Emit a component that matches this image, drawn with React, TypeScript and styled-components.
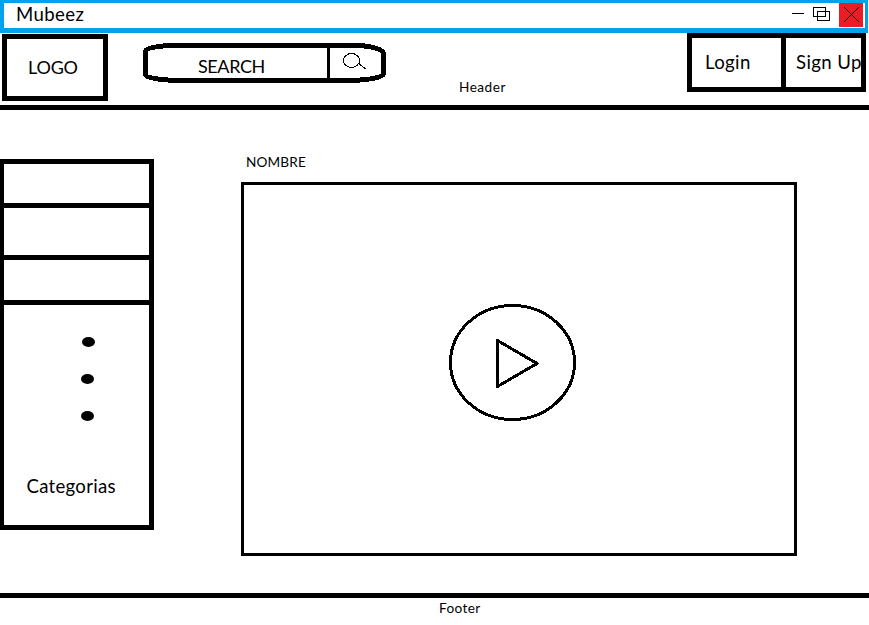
import React from "react";
import styled, { createGlobalStyle } from "styled-components";

const Global = createGlobalStyle`
  *, *::before, *::after { box-sizing: border-box; }
  body { margin: 0; background: #fff; color: #000; font-family: Lato, Carlito, sans-serif; overflow: hidden; }
  svg { display: block; shape-rendering: crispEdges; fill: none; stroke: #000; }
`;

const Page = styled.div`
  display: flex;
  flex-direction: column;
  width: 869px;
  height: 625px;
`;

const Label = styled.span<{ $small?: boolean; $spacing?: number; $size?: number }>`
  display: block;
  white-space: nowrap;
  font-size: ${(p) => p.$size ?? (p.$small ? 13.6 : 18.6)}px;
  line-height: ${(p) => (p.$small ? 16 : 22)}px;
  letter-spacing: ${(p) => p.$spacing ?? 0}px;
`;

const TitleBar = styled.div`
  display: flex;
  justify-content: space-between;
  width: 868px;
  height: 33px;
  padding-left: 12px;
  border: solid #00a2e8;
  border-width: 3px 3px 5px 4px;
`;

const WindowControls = styled.div`
  display: flex;
  margin-right: 2px;
`;

const CloseButton = styled.div`
  width: 24px;
  height: 24px;
  background: #ed1c24;
`;

const Header = styled.header`
  display: flex;
  align-items: flex-start;
  height: 77px;
  border-bottom: 5px solid #000;
`;

const Logo = styled.div`
  width: 106px;
  height: 67px;
  margin: 1px 0 0 2px;
  padding: 17px 0 0 21px;
  border: 5px solid #000;
`;

const Search = styled.div`
  position: relative;
  width: 243px;
  height: 40px;
  margin: 10px 0 0 35px;
  padding: 12px 0 0 55px;
`;

const SearchFrame = styled.svg`
  position: absolute;
  inset: 0;
`;

const HeaderCaption = styled.div`
  width: 228px;
  margin: 46px 0 0 73px;
`;

const Account = styled.div`
  display: flex;
  width: 179px;
  height: 59px;
  border: 5px solid #000;
`;

const AccountButton = styled.div<{ $divided?: boolean }>`
  width: ${(p) => (p.$divided ? 94 : 75)}px;
  padding: 13px 0 0 ${(p) => (p.$divided ? 13 : 10)}px;
  border-right: ${(p) => (p.$divided ? "5px solid #000" : "none")};
`;

const Main = styled.main`
  display: flex;
  align-items: flex-start;
  height: 483px;
`;

const Sidebar = styled.aside`
  width: 154px;
  height: 371px;
  margin-top: 49px;
  border: solid #000;
  border-width: 5px 5px 5px 4px;
`;

const Category = styled.div<{ $height: number }>`
  height: ${(p) => p.$height}px;
  border-bottom: 5px solid #000;
`;

const More = styled.div`
  display: flex;
  flex-direction: column;
  gap: 27px;
  padding: 32px 0 0 77px;
`;

const Dot = styled.i<{ $shift?: number }>`
  width: 13px;
  height: 10px;
  margin-left: ${(p) => p.$shift ?? 0}px;
  border-radius: 50%;
  background: #000;
`;

const SidebarCaption = styled.div`
  margin: 54px 0 0 22.5px;
`;

const Content = styled.section`
  margin: 44px 0 0 87px;
`;

const ContentTitle = styled.div`
  height: 28px;
  padding-left: 5px;
`;

const Player = styled.div`
  width: 556px;
  height: 374px;
  padding: 119px 0 0 205px;
  border: 3px solid #000;
`;

const Footer = styled.footer`
  height: 32px;
  padding: 2px 0 0 439px;
  border-top: 5px solid #000;
`;

export default function App() {
  return (
    <Page>
      <Global />
      <TitleBar>
        <Label $spacing={0.4}>Mubeez</Label>
        <WindowControls>
          <svg width="47" height="24" viewBox="792 3 47 24">
            <path d="M792 13.5h12M813.5 7.5h12v9h-12zM817.5 11.5h12v9h-12z" />
          </svg>
          <CloseButton>
            <svg width="24" height="24">
              <path d="M5 4L20 19M20 4L5 19" />
            </svg>
          </CloseButton>
        </WindowControls>
      </TitleBar>
      <Header>
        <Logo><Label $size={18} $spacing={-0.2}>LOGO</Label></Logo>
        <Search>
          <SearchFrame width="243" height="40" viewBox="143 43 243 40">
            <path strokeWidth="5" d="M169 45.5H359Q380 47 383.5 53V74Q382 79 353 80.5H175Q147 79 145.5 75V51Q147 47 169 45.5Z" />
            <path strokeWidth="3" d="M328.5 46V80" />
            <ellipse cx="351.5" cy="60.5" rx="8" ry="7" />
            <path d="M358 63L366 69" />
          </SearchFrame>
          <Label $size={18} $spacing={-0.4}>SEARCH</Label>
        </Search>
        <HeaderCaption><Label $small $spacing={0.5}>Header</Label></HeaderCaption>
        <Account>
          <AccountButton $divided><Label $spacing={0.35}>Login</Label></AccountButton>
          <AccountButton><Label $spacing={0.4}>Sign Up</Label></AccountButton>
        </Account>
      </Header>
      <Main>
        <Sidebar>
          <Category $height={44} />
          <Category $height={52} />
          <Category $height={45} />
          <More>
            <Dot $shift={1} />
            <Dot />
            <Dot />
          </More>
          <SidebarCaption><Label $spacing={0.27}>Categorias</Label></SidebarCaption>
        </Sidebar>
        <Content>
          <ContentTitle><Label $small $spacing={0.15}>NOMBRE</Label></ContentTitle>
          <Player>
            <svg width="127" height="117" viewBox="449 304 127 117" strokeWidth="3">
              <ellipse cx="512.5" cy="362.5" rx="62" ry="57" />
              <path strokeLinejoin="round" d="M497.5 340.5L537 363.5L497.5 386.5Z" />
            </svg>
          </Player>
        </Content>
      </Main>
      <Footer><Label $small $spacing={0.35}>Footer</Label></Footer>
    </Page>
  );
}
